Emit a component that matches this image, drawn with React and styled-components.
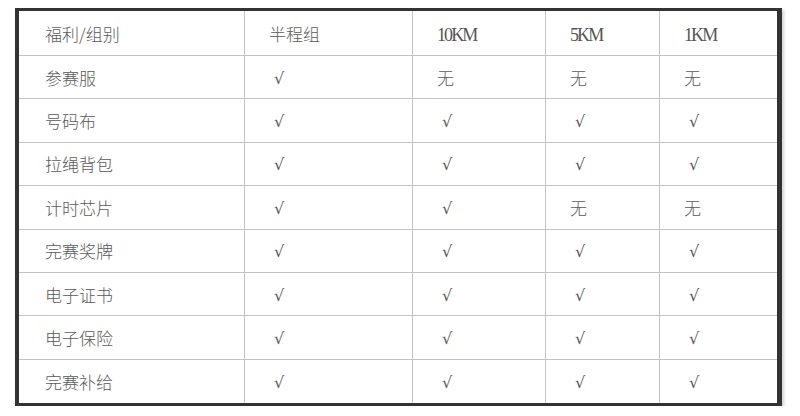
import React from 'react'
import styled, { createGlobalStyle } from 'styled-components'

const GlobalStyle = createGlobalStyle`
  html, body {
    margin: 0;
    padding: 0;
    background: #fff;
  }
  body {
    font-family: "Noto Sans CJK SC", "Liberation Serif", serif;
  }
`

const Frame = styled.div`
  box-sizing: border-box;
  width: 767px;
  height: 398px;
  margin: 8px 0 0 15px;
  border: 3px solid #333;
  border-left-width: 4px;
  border-right-width: 5px;
  box-shadow: 2px 2px 3px rgba(0, 0, 0, 0.18);
  background: #fff;
`

const Grid = styled.div`
  display: grid;
  grid-template-columns: 226px 168px 133px 114px 117px;
  grid-template-rows: 45px repeat(8, 1fr);
  height: 100%;
`

const Cell = styled.div`
  box-sizing: border-box;
  display: flex;
  align-items: center;
  padding-left: ${p => p.$first ? 26 : 24}px;
  border-right: ${p => p.$lastCol ? 'none' : '1px solid #c4c4c4'};
  border-bottom: ${p => p.$lastRow ? 'none' : '1px solid #c4c4c4'};
  color: #5a5a5a;
  font-size: 17px;
  font-weight: 300;
  white-space: nowrap;
`

const Latin = styled.span`
  font-family: "Liberation Serif", serif;
  font-size: 18px;
  letter-spacing: -1.9px;
  color: #555;
  padding-top: 4px;
`

const Check = styled.span`
  font-family: "DejaVu Serif", serif;
  font-size: 16px;
  color: #555;
  padding-left: 5px;
  padding-top: 2px;
`

const header = ['福利/组别', '半程组', '10KM', '5KM', '1KM']

const rows = [
  ['参赛服', '√', '无', '无', '无'],
  ['号码布', '√', '√', '√', '√'],
  ['拉绳背包', '√', '√', '√', '√'],
  ['计时芯片', '√', '√', '无', '无'],
  ['完赛奖牌', '√', '√', '√', '√'],
  ['电子证书', '√', '√', '√', '√'],
  ['电子保险', '√', '√', '√', '√'],
  ['完赛补给', '√', '√', '√', '√']
]

const renderValue = v => {
  if (v === '√') return <Check>√</Check>
  if (/^[0-9A-Z]+$/.test(v)) return <Latin>{v}</Latin>
  return v
}

export default function App () {
  const all = [header, ...rows]
  return (
    <>
      <GlobalStyle />
      <Frame>
        <Grid>
          {all.map((row, ri) =>
            row.map((v, ci) => (
              <Cell
                key={ri + '-' + ci}
                $first={ci === 0}
                $lastCol={ci === row.length - 1}
                $lastRow={ri === all.length - 1}
              >
                {renderValue(v)}
              </Cell>
            ))
          )}
        </Grid>
      </Frame>
    </>
  )
}
